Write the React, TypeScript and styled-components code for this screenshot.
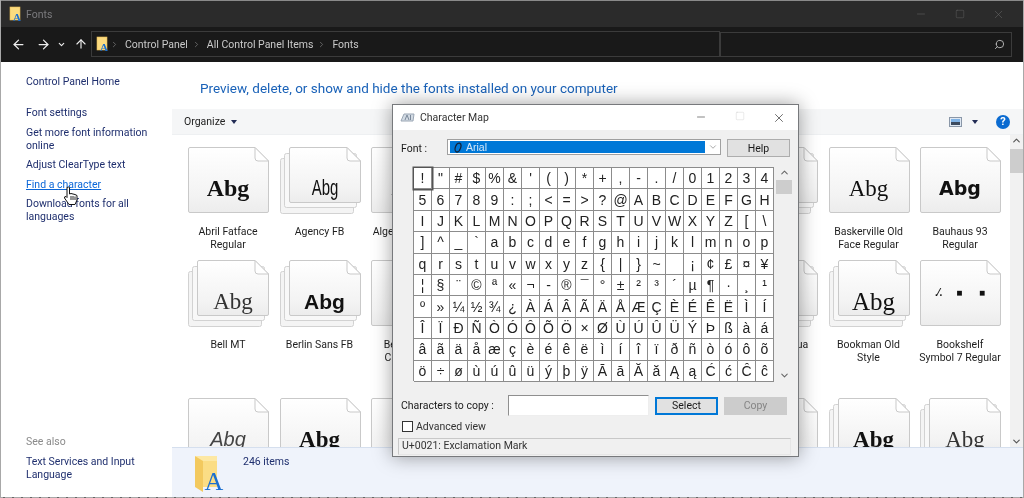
import React from 'react';
import styled, { createGlobalStyle } from 'styled-components';
import { ArrowLeft, ArrowRight, ArrowUp, ChevronDown, ChevronRight, ChevronUp, Minus, Search, Square, X } from 'lucide-react';

const ui = 'Roboto, "Noto Sans", sans-serif';

const Global = createGlobalStyle`
  html, body { margin: 0; padding: 0; width: 1024px; height: 498px; overflow: hidden; background: #fff; }
  * { box-sizing: border-box; }
`;

const Page = styled.div`
  position: relative; width: 1024px; height: 498px; display: flex; flex-direction: column;
  font-family: ${ui}; font-size: 10.5px; overflow: hidden; background: #fff;
  border-left: 1px solid #a8a8a8; border-right: 1px solid #a8a8a8; filter: blur(.3px);
`;
const TitleBar = styled.header`
  height: 27px; flex: none; display: flex; align-items: center; background: #2b2b2b; color: #7b7b7e;
  padding-left: 8px; border-top: 1px solid #8a8a8a; font-size: 10.5px; gap: 3px;
`;
const TitleText = styled.span` flex: 1; `;
const WinBtn = styled.span`
  width: 39px; height: 26px; display: flex; align-items: center; justify-content: center; color: #6a6a6a;
`;
const WinBtns = styled.div` display: flex; padding-right: 5px; `;
const NavBar = styled.nav`
  height: 35px; flex: none; display: flex; align-items: center; background: #191919; padding: 0 10px 1px 0; color: #eee;
`;
const NavBtn = styled.span<{ $w: number }>`
  width: ${p => p.$w}px; display: flex; justify-content: center; align-items: center; flex: none;
`;
const Crumbs = styled.div`
  margin-left: 1px; width: 629px; height: 26px; border: 1px solid #3b3b3b; display: flex; align-items: center;
  padding-left: 4px; color: #c9c9c9; font-size: 10.5px; gap: 4px;
`;
const CrumbIcon = styled.span` display: flex; margin-right: -4px; `;
const CrumbSep = styled.span` display: flex; margin-right: 2px; color: #777; `;
const SearchBox = styled.div`
  margin-left: 0; width: 292px; height: 25px; border: 1px solid #3b3b3b; display: flex; align-items: center;
  justify-content: flex-end; padding-right: 6px; color: #bbb;
`;
const Body = styled.div` flex: 1; display: flex; min-height: 0; `;
const Sidebar = styled.aside`
  width: 171px; flex: none; display: flex; flex-direction: column; padding: 13px 0 10px 25px; color: #1f2f6e;
`;
const SideLink = styled.a<{ $active?: boolean }>`
  display: block; width: 125px; line-height: 13px; margin-bottom: 6.5px;
  color: ${p => (p.$active ? '#0a66d8' : '#1f2f6e')};
  text-decoration: ${p => (p.$active ? 'underline' : 'none')};
`;
const SideHome = styled(SideLink)` margin-bottom: 18px; `;
const SeeAlso = styled.div` margin-top: auto; color: #8a8a8a; line-height: 13px; margin-bottom: 7px; `;
const Main = styled.main` flex: 1; display: flex; flex-direction: column; min-width: 0; `;
const Heading = styled.h1`
  height: 47px; flex: none; margin: 0; padding: 15px 0 0 28px; font-weight: 400; font-size: 13.5px; line-height: 22px; color: #1a62b8;
`;
const Toolbar = styled.div`
  height: 26px; flex: none; background: #f5f6f7; border-bottom: 1px solid #eef0f2; display: flex; align-items: center;
  padding: 0 13px 0 12px; color: #222; gap: 6px;
`;
const Spacer = styled.span` flex: 1; `;
const Caret = styled.span<{ $gap?: number }>`
  width: 0; height: 0; border-left: 3.5px solid transparent; border-right: 3.5px solid transparent; border-top: 4px solid #222c55;
  margin-left: ${p => p.$gap ?? 0}px;
`;
const Help = styled.span`
  width: 14px; height: 14px; border-radius: 50%; background: #0b6bd1; color: #fff; font-weight: 700; font-size: 11px;
  display: flex; align-items: center; justify-content: center; margin-left: 12px;
`;
const Files = styled.div` flex: 1; min-height: 0; display: flex; overflow: hidden; `;
const Grid = styled.div`
  flex: 1; display: grid; grid-template-columns: repeat(9, 91.5px); grid-template-rows: 113px 138px 80px;
  padding: 12px 0 0 16px; overflow: hidden;
`;
const Item = styled.div` width: 80px; display: flex; flex-direction: column; align-items: center; `;
const Tile = styled.div` position: relative; width: 82px; height: 68px; flex: none; align-self: flex-start; `;
const Sample = styled.span<{ $x: number; $y: number; $family: string; $size: number; $weight: number; $sx: number; $italic?: boolean; $color: string }>`
  position: absolute; left: ${p => p.$x}px; top: ${p => p.$y}px; white-space: pre; color: ${p => p.$color};
  transform: translate(-50%, -50%) scaleX(${p => p.$sx});
  font-family: ${p => p.$family}; font-size: ${p => p.$size}px; font-weight: ${p => p.$weight};
  font-style: ${p => (p.$italic ? 'italic' : 'normal')}; line-height: 1;
`;
const Label = styled.div<{ $wide?: boolean }>`
  width: ${p => (p.$wide ? 82 : 80)}px; text-align: center; margin-top: 10px; line-height: 13px; color: #1e1e1e; flex: none;
`;
const VScroll = styled.div`
  width: 13px; flex: none; background: #f1f1f1; display: flex; flex-direction: column; align-items: center; color: #555; margin-right: 0;
`;
const VThumb = styled.div` width: 100%; height: 24px; background: #cdcdcd; margin-top: 3px; `;
const VFill = styled.div` flex: 1; `;
const Status = styled.footer`
  height: 50px; flex: none; background: #eff3fb; border-top: 1px solid #d5dfee; display: flex; padding: 7px 0 0 22px; color: #1f2f6e;
`;
const Count = styled.span` margin: 0 0 0 17px; line-height: 13px; `;
const BottomEdge = styled.div`
  height: 1px; flex: none; margin-left: -1px; margin-right: -1px;
  background: repeating-linear-gradient(90deg, #a8a8a8 0 3px, #666 3px 5px, #a8a8a8 5px 9px);
`;
const Hand = styled.svg` position: absolute; left: 62px; top: 186px; `;

const Dialog = styled.section`
  position: absolute; left: 391px; top: 104px; width: 407px; height: 353px; background: #f0f0f0;
  border: 1px solid #77797c; box-shadow: 0 0 18px rgba(0, 0, 0, .38); display: flex; flex-direction: column; color: #1a1a1a;
`;
const DlgTitle = styled.div`
  height: 25px; flex: none; background: #fff; display: flex; align-items: center; padding-left: 7px; gap: 5px; color: #333; font-size: 10.5px;
`;
const DlgBtns = styled.div` display: flex; margin-left: auto; color: #333; `;
const DlgBtn = styled.span<{ $dim?: boolean }>`
  width: 39px; display: flex; justify-content: center; color: ${p => (p.$dim ? '#ccc' : '#333')};
`;
const FontRow = styled.div`
  flex: none; display: flex; align-items: flex-start; padding: 9px 0 0 8px; height: 37px;
`;
const FontLabel = styled.span` width: 46px; line-height: 19px; `;
const Combo = styled.div`
  width: 274px; height: 16px; background: #fff; border: 1px solid #a0a0a0; display: flex; align-items: center; padding: 1px 0 1px 2px; color: #777;
`;
const ComboSel = styled.div`
  width: 255px; height: 100%; background: #0078d7; color: #d6e8f8; display: flex; align-items: center; padding-left: 3px; gap: 3px;
  font-family: "Liberation Sans", sans-serif; font-size: 10.5px;
`;
const ComboArrow = styled.span` flex: 1; display: flex; justify-content: center; `;
const Btn = styled.button<{ $primary?: boolean; $off?: boolean; $w?: number }>`
  width: ${p => p.$w ?? 63}px; height: 18px; padding: 0; font-family: ${ui}; font-size: 10.5px; flex: none;
  background: ${p => (p.$off ? '#cccccc' : '#e1e1e1')};
  color: ${p => (p.$off ? '#858585' : '#1a1a1a')};
  border: ${p => (p.$primary ? '2px solid #0078d7' : p.$off ? '1px solid #ccc' : '1px solid #adadad')};
`;
const HelpBtn = styled(Btn)` margin-left: 6px; `;
const MapRow = styled.div` flex: none; display: flex; padding: 0 0 0 20px; height: 214px; align-items: stretch; `;
const Chars = styled.div`
  width: 361px; display: grid; grid-template-columns: repeat(20, 18px); grid-auto-rows: 21.4px; background: #fff;
  border-top: 1px solid #8c8c8c; border-left: 1px solid #8c8c8c;
`;
const Cell = styled.div<{ $focus?: boolean }>`
  display: flex; align-items: center; justify-content: center; font-family: "Liberation Sans", sans-serif; font-size: 14px; color: #222;
  border-right: 1px solid #8c8c8c; border-bottom: 1px solid #8c8c8c;
  box-shadow: ${p => (p.$focus ? '0 0 0 1.5px #555' : 'none')};
  z-index: ${p => (p.$focus ? 1 : 0)}; position: relative;
`;
const MapScroll = styled.div`
  width: 16px; margin-left: 2px; display: flex; flex-direction: column; align-items: center; color: #666; background: #f0f0f0;
`;
const MapThumb = styled.div` width: 100%; height: 14px; background: #cdcdcd; margin-top: 2px; `;
const CopyRow = styled.div` flex: none; display: flex; align-items: center; padding: 14px 0 0 8px; height: 35px; `;
const CopyLabel = styled.span` width: 107px; `;
const CopyInput = styled.div`
  width: 141px; height: 21px; background: #fff; border: 1px solid #8f8f8f; border-right-color: #eee; border-bottom-color: #eee; margin-right: 6px;
`;
const CopyBtn = styled(Btn)` margin-right: 6px; `;
const AdvRow = styled.label` flex: none; display: flex; align-items: center; gap: 3px; padding: 2px 0 0 9px; height: 19px; color: #333; `;
const Box = styled.span` width: 11px; height: 11px; background: #fff; border: 1px solid #333; `;
const DlgStatus = styled.div`
  margin: 3px 7px 0 5px; height: 17px; border: 1px solid #c8c8c8; border-right-color: #e6e6e6; border-bottom-color: #e6e6e6; padding-left: 3px; line-height: 14px; color: #333;
`;

const FolderA = ({ w, h }: { w: number; h: number }) => (
  <svg width={w} height={h} viewBox="0 0 32 38">
    <path d="M1 1 L9 3 V37 L1 32 Z" fill="#f3c95e" />
    <path d="M9 3 H23 V32 H9 Z" fill="#fbdd85" />
    <path d="M1 1 H23 V6 H9 Z" fill="#fde8a4" />
    <text x="20" y="35" textAnchor="middle" fontFamily="Liberation Serif, serif" fontSize="26" fill="#1b6fd0">A</text>
  </svg>
);

const SmallFolderA = () => (
  <svg width="14" height="16" viewBox="0 0 14 16">
    <rect x="1" y="1" width="10" height="13" fill="#fbdb7f" stroke="#e8bd55" strokeWidth=".6" />
    <text x="8" y="15" textAnchor="middle" fontFamily="Liberation Serif, serif" fontSize="11" fontWeight="700" fill="#1b6fd0">A</text>
  </svg>
);

const Page1 = ({ x, y, w, h, id }: { x: number; y: number; w: number; h: number; id: string }) => (
  <>
    <path
      d={`M${x + 2} ${y + .5} H${x + w - 14} L${x + w - .5} ${y + 14} V${y + h - 2} Q${x + w - .5} ${y + h - .5} ${x + w - 2} ${y + h - .5} H${x + 2} Q${x + .5} ${y + h - .5} ${x + .5} ${y + h - 2} V${y + 2} Q${x + .5} ${y + .5} ${x + 2} ${y + .5} Z`}
      fill={`url(#${id})`} stroke="#c9c9c9"
    />
    <path d={`M${x + w - 14} ${y + .5} V${y + 11} Q${x + w - 14} ${y + 14} ${x + w - 11} ${y + 14} H${x + w - .5} Z`} fill="#fff" stroke="#c9c9c9" />
  </>
);

type Face = { family: string; size: number; weight?: number; sx?: number; italic?: boolean; text?: string; y?: number; color?: string };
const serif = '"Liberation Serif", serif';
const sans = '"Liberation Sans", sans-serif';

const FontTile = ({ id, stacked, face, label, wide }: { id: string; stacked?: boolean; face?: Face; label?: string; wide?: boolean }) => (
  <Item>
    <Tile>
      <svg width="82" height="68" viewBox="0 0 82 68">
        <defs>
          <linearGradient id={id} x1="0" y1="0" x2="0" y2="1">
            <stop offset="0" stopColor="#fff" />
            <stop offset=".75" stopColor="#f3f3f3" />
            <stop offset="1" stopColor="#ececec" />
          </linearGradient>
        </defs>
        {stacked ? (
          <>
            <rect x=".5" y="11.5" width="73" height="55" rx="2" fill="#f4f4f4" stroke="#d2d2d2" />
            <rect x="4.5" y="6.5" width="72" height="54" rx="2" fill="#f8f8f8" stroke="#d2d2d2" />
            <Page1 x={9} y={0} w={72} h={56} id={id} />
          </>
        ) : (
          <Page1 x={0} y={0} w={81} h={66} id={id} />
        )}
      </svg>
      {face && (
        <Sample $x={stacked ? 45 : 40} $y={face.y ?? 41} $family={face.family} $size={face.size} $weight={face.weight ?? 400} $sx={face.sx ?? 1} $italic={face.italic} $color={face.color ?? '#111'}>
          {face.text ?? 'Abg'}
        </Sample>
      )}
    </Tile>
    {label && <Label $wide={wide}>{label}</Label>}
  </Item>
);

const Empty = styled.div``;

const rows: (React.ComponentProps<typeof FontTile> | null)[] = [
  { id: 'a1', face: { family: serif, size: 24, weight: 700 }, label: 'Abril Fatface Regular' },
  { id: 'a2', stacked: true, face: { family: sans, size: 22, sx: .68 }, label: 'Agency FB' },
  { id: 'a3', face: { family: serif, size: 22, weight: 700 }, label: 'Algerian Regular' },
  null, null, null,
  { id: 'a7', stacked: true },
  { id: 'a8', face: { family: serif, size: 23 }, label: 'Baskerville Old Face Regular' },
  { id: 'a9', face: { family: '"DejaVu Sans", sans-serif', size: 20, weight: 700, sx: .95 }, label: 'Bauhaus 93 Regular' },
  { id: 'b1', stacked: true, face: { family: serif, size: 23, color: '#333' }, label: 'Bell MT' },
  { id: 'b2', stacked: true, face: { family: sans, size: 21, weight: 700 }, label: 'Berlin Sans FB' },
  { id: 'b3', label: 'Bernard MT Condensed' },
  null, null, null,
  { id: 'b7', stacked: true, label: 'Book Antiqua' },
  { id: 'b8', stacked: true, face: { family: serif, size: 25 }, label: 'Bookman Old Style' },
  { id: 'b9', face: { family: sans, size: 10, weight: 700, y: 33, text: '.⁄.     ■      ■' }, label: 'Bookshelf Symbol 7 Regular', wide: true },
  { id: 'c1', face: { family: sans, size: 20, italic: true, color: '#444' } },
  { id: 'c2', face: { family: serif, size: 23, weight: 700 } },
  { id: 'c3', face: { family: serif, size: 22, color: '#555' } },
  null, null, null,
  { id: 'c7' },
  { id: 'c8', stacked: true, face: { family: serif, size: 23, weight: 700 } },
  { id: 'c9', stacked: true, face: { family: serif, size: 23, color: '#333' } },
];

const charRows = [
  '!"#$%&\'()*+,-./01234',
  '56789:;<=>?@ABCDEFGH',
  'IJKLMNOPQRSTUVWXYZ[\\',
  ']^_`abcdefghijklmnop',
  'qrstuvwxyz{|}~\u00a0¡¢£¤¥',
  '¦§¨©ª«¬-®¯°±²³´µ¶·¸¹',
  'º»¼½¾¿ÀÁÂÃÄÅÆÇÈÉÊËÌÍ',
  'ÎÏÐÑÒÓÔÕÖ×ØÙÚÛÜÝÞßàá',
  'âãäåæçèéêëìíîïðñòóôõ',
  'ö÷øùúûüýþÿĀāĂăĄąĆćĈĉ',
];

const Crumb = () => <CrumbSep><ChevronRight size={9} strokeWidth={2} /></CrumbSep>;

export default function App() {
  return (
    <>
      <Global />
      <Page>
        <TitleBar>
          <SmallFolderA />
          <TitleText>Fonts</TitleText>
          <WinBtns>
            <WinBtn><Minus size={12} strokeWidth={1} /></WinBtn>
            <WinBtn><Square size={10} strokeWidth={1} /></WinBtn>
            <WinBtn><X size={13} strokeWidth={1} /></WinBtn>
          </WinBtns>
        </TitleBar>
        <NavBar>
          <NavBtn $w={34}><ArrowLeft size={15} strokeWidth={2} /></NavBtn>
          <NavBtn $w={17}><ArrowRight size={15} strokeWidth={2} /></NavBtn>
          <NavBtn $w={19}><ChevronDown size={9} strokeWidth={3} /></NavBtn>
          <NavBtn $w={19}><ArrowUp size={14} strokeWidth={2} /></NavBtn>
          <Crumbs>
            <CrumbIcon><SmallFolderA /></CrumbIcon>
            <Crumb />
            <span>Control Panel</span>
            <Crumb />
            <span>All Control Panel Items</span>
            <Crumb />
            <span>Fonts</span>
          </Crumbs>
          <SearchBox><Search size={11} strokeWidth={2} style={{ transform: 'scaleX(-1)' }} /></SearchBox>
        </NavBar>
        <Body>
          <Sidebar>
            <SideHome>Control Panel Home</SideHome>
            <SideLink>Font settings</SideLink>
            <SideLink>Get more font information online</SideLink>
            <SideLink>Adjust ClearType text</SideLink>
            <SideLink $active>Find a character</SideLink>
            <SideLink>Download fonts for all languages</SideLink>
            <SeeAlso>See also</SeeAlso>
            <SideLink>Text Services and Input Language</SideLink>
          </Sidebar>
          <Main>
            <Heading>Preview, delete, or show and hide the fonts installed on your computer</Heading>
            <Toolbar>
              <span>Organize</span>
              <Caret />
              <Spacer />
              <svg width="13" height="10" viewBox="0 0 13 10">
                <rect x=".5" y=".5" width="12" height="9" fill="#dfe8f3" stroke="#8a97a8" />
                <rect x="2" y="2" width="9" height="3" fill="#7fb2e5" />
                <rect x="2" y="5" width="9" height="3" fill="#3c4a5e" />
              </svg>
              <Caret $gap={4} />
              <Help>?</Help>
            </Toolbar>
            <Files>
              <Grid>
                {rows.map((r, i) => (r ? <FontTile key={r.id} {...r} /> : <Empty key={i} />))}
              </Grid>
              <VScroll>
                <ChevronUp size={11} strokeWidth={2.5} />
                <VThumb />
                <VFill />
                <ChevronDown size={11} strokeWidth={2.5} />
              </VScroll>
            </Files>
            <Status>
              <FolderA w={32} h={38} />
              <Count>246 items</Count>
            </Status>
          </Main>
        </Body>
        <BottomEdge />
        <Hand width="16" height="20" viewBox="0 0 16 20">
          <path d="M4 1.5 Q5.5 .5 6.5 1.5 V8 L8 7.5 L10 8 L12 8.5 L14 9.5 V14 L12 18.5 H6 L1.5 12 Q1 10.5 3 10.5 L4 11.5 Z" fill="#fff" stroke="#111" strokeWidth="1" />
          <path d="M8 10 V14 M10 10 V14 M12 10.5 V14" stroke="#111" strokeWidth=".9" />
        </Hand>
        <Dialog>
          <DlgTitle>
            <svg width="15" height="10" viewBox="0 0 15 10">
              <path d="M1 8 L4 1 H14 L13 8 Z" fill="#d3dbe4" stroke="#9aa6b4" />
              <path d="M5 7 L7 2 L9 7 M10.5 2 V7" stroke="#7a8899" fill="none" />
            </svg>
            <span>Character Map</span>
            <DlgBtns>
              <DlgBtn><Minus size={12} strokeWidth={1.2} /></DlgBtn>
              <DlgBtn $dim><Square size={10} strokeWidth={1} /></DlgBtn>
              <DlgBtn><X size={14} strokeWidth={1.2} /></DlgBtn>
            </DlgBtns>
          </DlgTitle>
          <FontRow>
            <FontLabel>Font :</FontLabel>
            <Combo>
              <ComboSel>
                <svg width="10" height="11" viewBox="0 0 10 11">
                  <ellipse cx="5" cy="5.5" rx="2.6" ry="4.6" fill="none" stroke="#10243c" strokeWidth="1.3" transform="rotate(20 5 5.5)" />
                </svg>
                Arial
              </ComboSel>
              <ComboArrow><ChevronDown size={10} strokeWidth={1.5} /></ComboArrow>
            </Combo>
            <HelpBtn>Help</HelpBtn>
          </FontRow>
          <MapRow>
            <Chars>
              {charRows.join('').split('').map((c, i) => (
                <Cell key={i} $focus={i === 0}>{c}</Cell>
              ))}
            </Chars>
            <MapScroll>
              <ChevronUp size={11} strokeWidth={2.2} />
              <MapThumb />
              <VFill />
              <ChevronDown size={11} strokeWidth={2.2} />
            </MapScroll>
          </MapRow>
          <CopyRow>
            <CopyLabel>Characters to copy :</CopyLabel>
            <CopyInput />
            <CopyBtn $primary>Select</CopyBtn>
            <Btn $off>Copy</Btn>
          </CopyRow>
          <AdvRow><Box />Advanced view</AdvRow>
          <DlgStatus>U+0021: Exclamation Mark</DlgStatus>
        </Dialog>
      </Page>
    </>
  );
}
